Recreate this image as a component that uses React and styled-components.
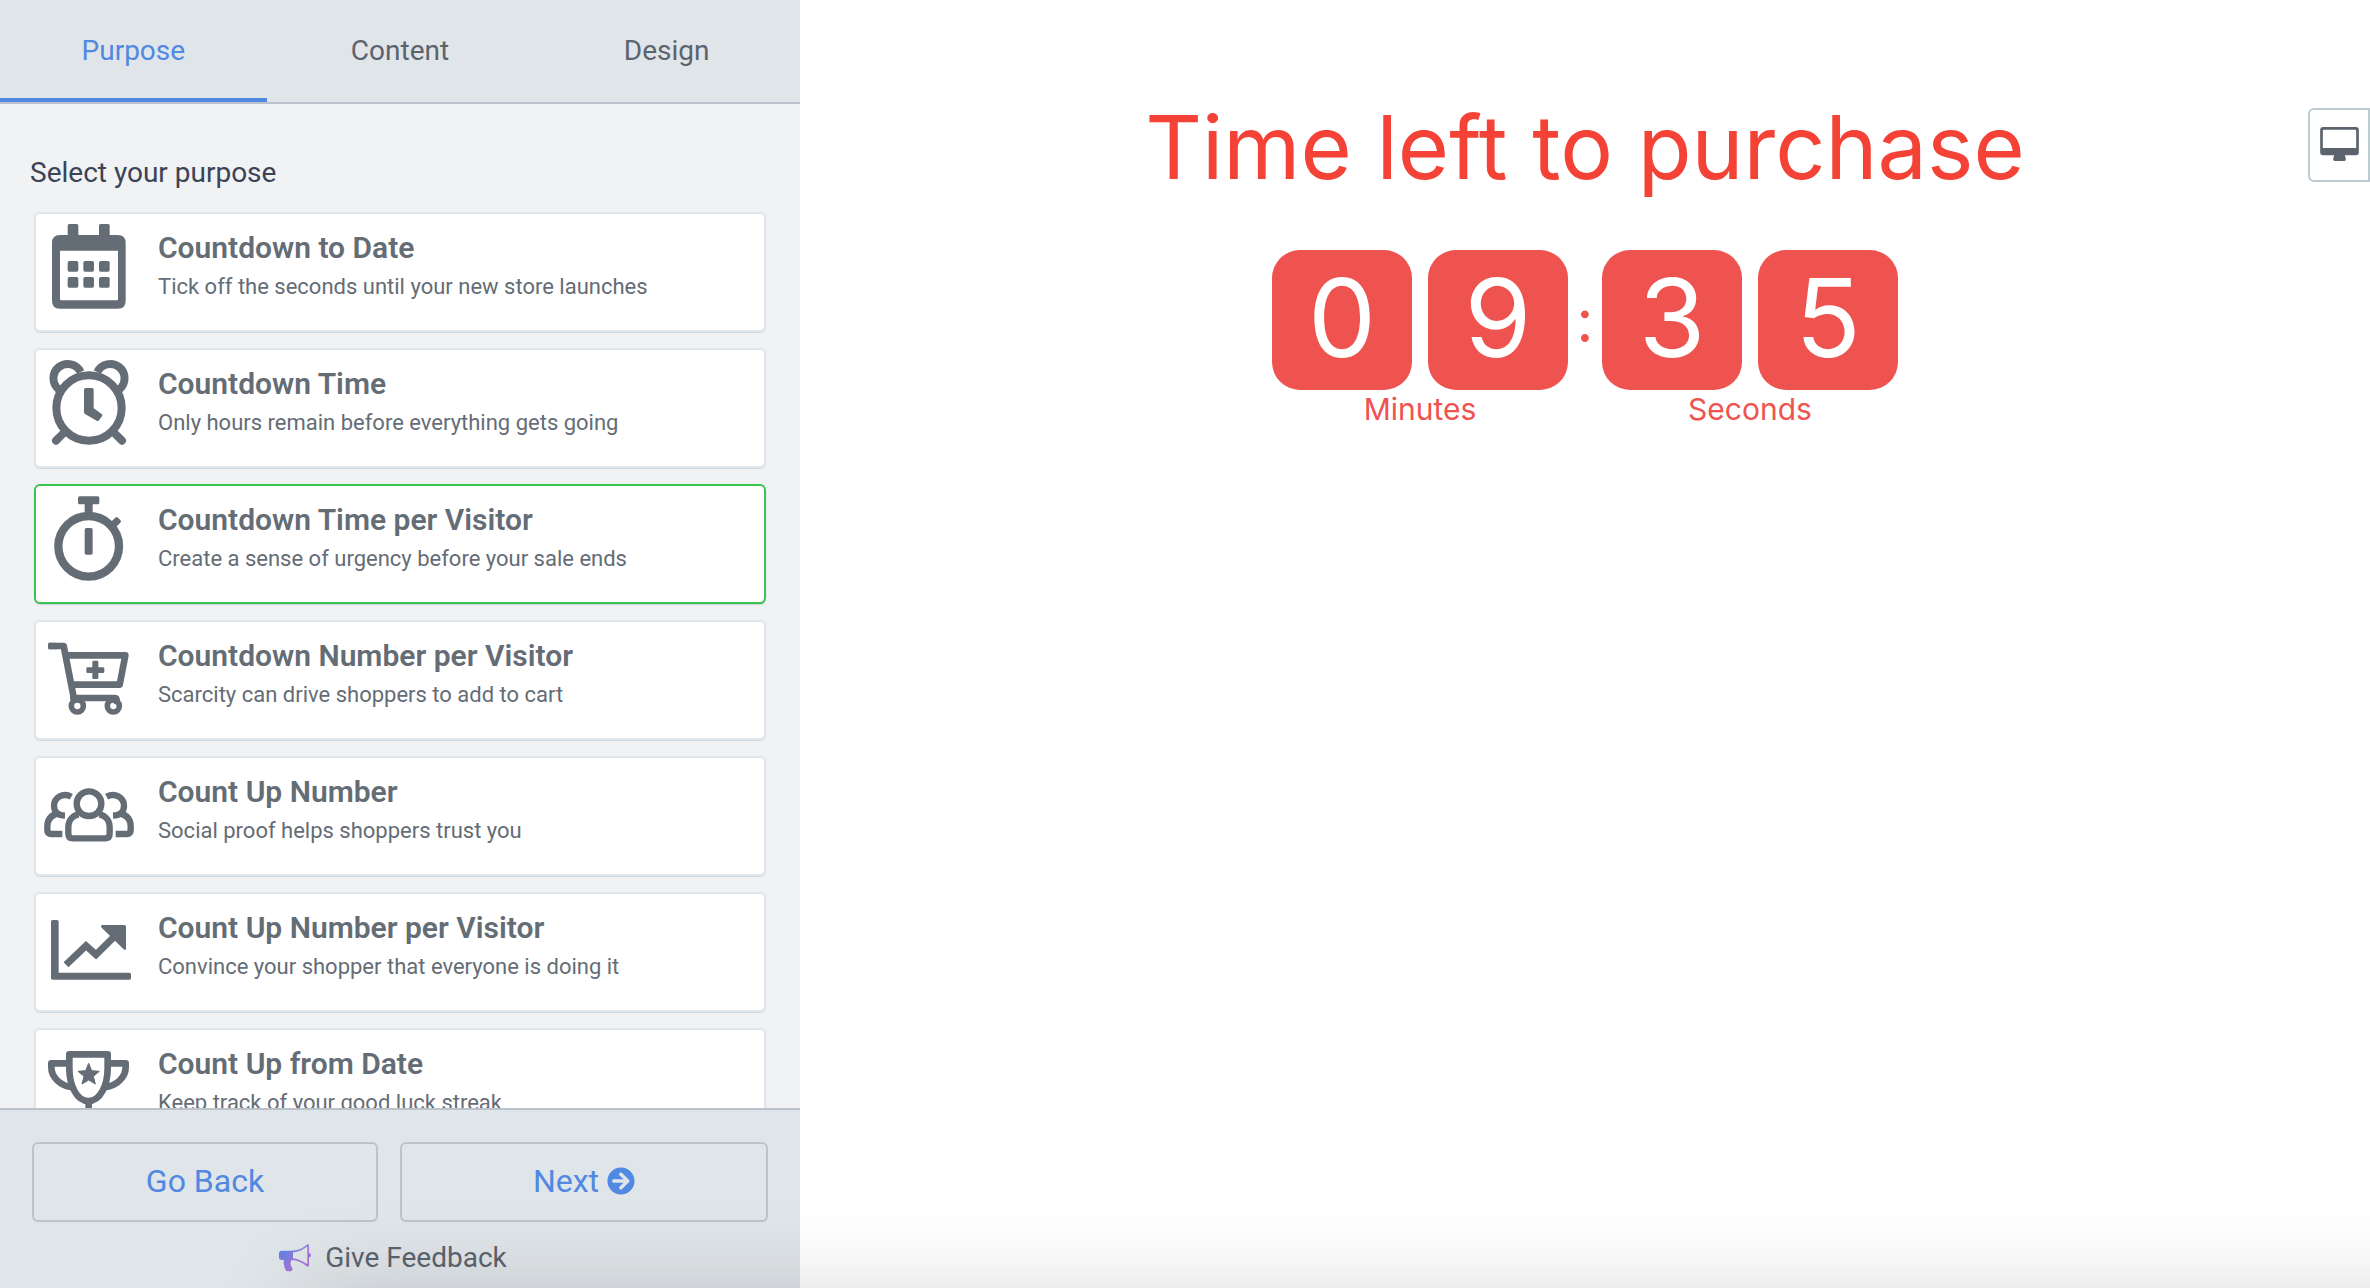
import React, { useState } from "react";
import styled, { createGlobalStyle } from "styled-components";
import { FaArrowCircleRight } from "react-icons/fa";

const GlobalStyle = createGlobalStyle`
  * {
    box-sizing: border-box;
  }

  body {
    margin: 0;
    background: #fff;
    font-family: Roboto, sans-serif;
  }

  button {
    font-family: inherit;
    cursor: pointer;
  }
`;

function CalendarIcon() {
  return (
    <PurposeSvg>
      <rect x="71" y="6" width="32" height="50" rx="5" />
      <rect x="165" y="6" width="32" height="50" rx="5" />
      <path
        fillRule="evenodd"
        d="M48 39H221Q245 39 245 63V236Q245 260 221 260H48Q24 260 24 236V63Q24 39 48 39ZM48 86V232Q48 235 51 235H219Q222 235 222 232V86Z"
      />
      {[71, 118, 165].map((x) => (
        <React.Fragment key={x}>
          <rect x={x} y="117" width="32" height="32" rx="5" />
          <rect x={x} y="165" width="32" height="32" rx="5" />
        </React.Fragment>
      ))}
    </PurposeSvg>
  );
}

function AlarmIcon() {
  return (
    <PurposeSvg>
      <g fill="none" stroke="currentColor" strokeWidth="24">
        <circle cx="135" cy="150" r="98" />
        <path d="M44 94A43 43 0 1 1 110 42" />
        <path d="M226 94A43 43 0 1 0 160 42" />
        <path d="M62 222L36 248M208 222L234 248" strokeLinecap="round" />
      </g>
      <path d="M125 90H144Q149 90 149 95V151L173 168Q177 171 174 175L165 187Q162 191 158 188L123 168Q120 166 120 162V95Q120 90 125 90Z" />
    </PurposeSvg>
  );
}

function StopwatchIcon() {
  return (
    <PurposeSvg>
      <circle cx="134" cy="157" r="91" fill="none" stroke="currentColor" strokeWidth="25" />
      <rect x="102" y="7" width="64" height="24" rx="5" />
      <rect x="122" y="24" width="24" height="40" />
      <rect x="122" y="102" width="24" height="80" rx="5" />
      <path d="M194 90L214 71Q218 67 222 71L229 78Q233 82 229 86L209 106Z" />
    </PurposeSvg>
  );
}

function CartIcon() {
  return (
    <PurposeSvg>
      <g fill="none" stroke="currentColor" strokeWidth="20" strokeLinejoin="round">
        <path d="M14 48H59L91 212" />
        <path d="M66 76H244L227 164H82" />
        <path d="M88 204H214Q218 204 218 214" strokeLinecap="round" />
        <circle cx="100" cy="228" r="18" strokeWidth="17" />
        <circle cx="208" cy="228" r="18" strokeWidth="17" />
      </g>
      <rect x="12" y="38" width="30" height="20" rx="5" />
      <rect x="145" y="92" width="18" height="55" rx="4" />
      <rect x="127" y="112" width="54" height="17" rx="4" />
    </PurposeSvg>
  );
}

function PeopleIcon() {
  return (
    <PurposeSvg>
      <g fill="none" stroke="currentColor" strokeWidth="19">
        <circle cx="135" cy="113" r="37" />
        <path d="M104 145C84 149 73 164 73 184V203Q73 217 87 217H183Q197 217 197 203V184C197 164 186 149 166 145" />
        <path d="M82 92C56 78 30 96 30 120C30 134 39 148 63 149" />
        <path d="M42 142C20 148 10 162 10 180V192Q10 204 22 204H55" />
        <path d="M188 92C214 78 240 96 240 120C240 134 231 148 207 149" />
        <path d="M228 142C250 148 260 162 260 180V192Q260 204 248 204H215" />
      </g>
    </PurposeSvg>
  );
}

function ChartIcon() {
  return (
    <PurposeSvg>
      <path d="M26 54H39Q44 54 44 59V212H256Q261 212 261 217V228Q261 233 256 233H26Q21 233 21 228V59Q21 54 26 54Z" />
      <path d="M66 188L126 131L156 158L218 97" fill="none" stroke="currentColor" strokeWidth="21" />
      <path d="M175 69H241Q246 69 246 74V139Q246 147 239 142L173 77Q168 70 175 69Z" />
    </PurposeSvg>
  );
}

function TrophyIcon() {
  return (
    <PurposeSvg>
      <g fill="none" stroke="currentColor" strokeWidth="20" strokeLinejoin="round">
        <path d="M76 49H191V90C191 140 170 189 133 189C97 189 76 140 76 90Z" />
        <path d="M72 76H22V88C22 118 48 142 84 148" />
        <path d="M195 76H245V88C245 118 219 142 183 148" />
        <path d="M134 190V244M84 250H184" />
      </g>
      <path d="M134 76L143 98L166 100L148 115L154 138L134 126L114 138L120 115L102 100L125 98Z" stroke="currentColor" strokeWidth="3" strokeLinejoin="round" />
    </PurposeSvg>
  );
}

function MegaphoneIcon() {
  return (
    <svg width="32" height="28" viewBox="0 0 96 84" aria-hidden="true">
      <defs>
        <linearGradient id="megaphone" x1="0" y1="0" x2="1" y2="1">
          <stop offset="0.1" stopColor="#5585e6" />
          <stop offset="0.55" stopColor="#9a78dc" />
          <stop offset="1" stopColor="#b96ad4" />
        </linearGradient>
      </defs>
      <path
        fill="url(#megaphone)"
        fillRule="evenodd"
        d="M8 20H38C58 19 72 12 83 2Q90 -2 90 5V27Q96 28 96 34Q96 40 90 41V63Q90 71 83 67C70 56 56 49 38 48C32 56 35 65 40 73Q42 80 35 82H26Q20 82 18 74C14 63 13 55 15 48H8Q0 48 0 40V28Q0 20 8 20ZM42 25V43C58 45 73 52 85 61V7C73 17 58 24 42 25Z"
      />
    </svg>
  );
}

function DesktopIcon() {
  return (
    <svg width="39" height="34" viewBox="0 0 116 102" fill="#5b636d" aria-hidden="true">
      <path
        fillRule="evenodd"
        d="M9 0H107Q116 0 116 9V76Q116 85 107 85H74L77 95Q78 102 72 102H44Q38 102 39 95L42 85H9Q0 85 0 76V9Q0 0 9 0ZM8 11V63H108V11Q108 8 105 8H11Q8 8 8 11Z"
      />
    </svg>
  );
}

const tabs = ["Purpose", "Content", "Design"];

const purposes = [
  { id: "date", title: "Countdown to Date", text: "Tick off the seconds until your new store launches", Icon: CalendarIcon },
  { id: "time", title: "Countdown Time", text: "Only hours remain before everything gets going", Icon: AlarmIcon },
  { id: "timeVisitor", title: "Countdown Time per Visitor", text: "Create a sense of urgency before your sale ends", Icon: StopwatchIcon },
  { id: "numberVisitor", title: "Countdown Number per Visitor", text: "Scarcity can drive shoppers to add to cart", Icon: CartIcon },
  { id: "upNumber", title: "Count Up Number", text: "Social proof helps shoppers trust you", Icon: PeopleIcon },
  { id: "upVisitor", title: "Count Up Number per Visitor", text: "Convince your shopper that everyone is doing it", Icon: ChartIcon },
  { id: "upDate", title: "Count Up from Date", text: "Keep track of your good luck streak", Icon: TrophyIcon },
];

function TimeUnit({ digits, label }) {
  return (
    <Unit>
      <Digits>
        {digits.split("").map((digit, index) => (
          <Digit key={index}>{digit}</Digit>
        ))}
      </Digits>
      <UnitLabel>{label}</UnitLabel>
    </Unit>
  );
}

function App() {
  const [activeTab, setActiveTab] = useState("Purpose");
  const [purpose, setPurpose] = useState("timeVisitor");

  return (
    <Page>
      <GlobalStyle />
      <Sidebar>
        <Tabs>
          {tabs.map((tab) => (
            <Tab key={tab} $active={tab === activeTab} onClick={() => setActiveTab(tab)}>
              {tab}
            </Tab>
          ))}
        </Tabs>
        <Panel>
          <PanelTitle>Select your purpose</PanelTitle>
          <PurposeList>
            {purposes.map(({ id, title, text, Icon }) => (
              <PurposeCard
                key={id}
                $selected={id === purpose}
                aria-pressed={id === purpose}
                onClick={() => setPurpose(id)}
              >
                <Icon />
                <PurposeText>
                  <PurposeTitle>{title}</PurposeTitle>
                  <PurposeInfo>{text}</PurposeInfo>
                </PurposeText>
              </PurposeCard>
            ))}
          </PurposeList>
        </Panel>
        <Footer>
          <FooterButtons>
            <FooterButton>Go Back</FooterButton>
            <FooterButton>
              Next <FaArrowCircleRight size={28} />
            </FooterButton>
          </FooterButtons>
          <Feedback href="#feedback">
            <MegaphoneIcon />
            Give Feedback
          </Feedback>
        </Footer>
      </Sidebar>
      <Preview>
        <Heading>Time left to purchase</Heading>
        <Timer>
          <TimeUnit digits="09" label="Minutes" />
          <Colon>:</Colon>
          <TimeUnit digits="35" label="Seconds" />
        </Timer>
        <DeviceButton aria-label="Desktop view">
          <DesktopIcon />
        </DeviceButton>
      </Preview>
      <BottomShadow />
    </Page>
  );
}

const Page = styled.div`
  position: relative;
  display: flex;
  height: 100vh;
  overflow: hidden;
`;

const Sidebar = styled.aside`
  display: flex;
  flex-direction: column;
  flex: 0 0 800px;
  background: #f0f2f4;
`;

const Tabs = styled.nav`
  display: flex;
  background: #e0e5e9;
  border-bottom: 2px solid #bac3cc;
`;

const Tab = styled.button`
  flex: 1;
  height: 102px;
  padding: 2px 0 0;
  border: none;
  border-bottom: 4px solid ${(props) => (props.$active ? "#5088e2" : "transparent")};
  background: none;
  color: ${(props) => (props.$active ? "#5088e2" : "#5c636e")};
  font-size: 28px;
`;

const Panel = styled.div`
  flex: 1;
  min-height: 0;
  padding: 53px 30px 0;
  overflow: hidden auto;
  scrollbar-width: none;
`;

const PanelTitle = styled.h2`
  margin: 0 0 23px;
  color: #3b4354;
  font-size: 28px;
  font-weight: 400;
  line-height: 32px;
`;

const PurposeList = styled.div`
  display: flex;
  flex-direction: column;
  gap: 16px;
  padding: 0 4px 16px;
`;

const PurposeCard = styled.button`
  display: flex;
  align-items: flex-start;
  gap: 24px;
  height: 120px;
  padding: 8px;
  border: 2px solid ${(props) => (props.$selected ? "#39c452" : "#dfe5ea")};
  border-radius: 6px;
  background: #fff;
  box-shadow: 0 1px 1px #cdd6de;
  color: #646c75;
  text-align: left;
`;

const PurposeSvg = styled.svg.attrs({ viewBox: "0 0 270 270", fill: "currentColor", "aria-hidden": true })`
  flex: none;
  width: 90px;
  height: 90px;
`;

const PurposeText = styled.span`
  display: flex;
  flex-direction: column;
  gap: 7px;
  padding-top: 8px;
`;

const PurposeTitle = styled.span`
  font-size: 30px;
  font-weight: 600;
  line-height: 36px;
`;

const PurposeInfo = styled.span`
  font-size: 22px;
  line-height: 28px;
`;

const Footer = styled.footer`
  padding: 32px 32px 14px;
  border-top: 2px solid #bac3cc;
  background: #e0e5e9;
`;

const FooterButtons = styled.div`
  display: grid;
  grid-template-columns: 346fr 368fr;
  gap: 22px;
`;

const FooterButton = styled.button`
  display: flex;
  align-items: center;
  justify-content: center;
  gap: 8px;
  height: 80px;
  padding: 0 0 2px;
  border: 2px solid #bdc3c8;
  border-radius: 6px;
  background: none;
  color: #5088e2;
  font-size: 32px;
`;

const Feedback = styled.a`
  display: flex;
  align-items: center;
  justify-content: center;
  gap: 14px;
  margin-top: 20px;
  padding-right: 14px;
  color: #5c636e;
  font-size: 28px;
  line-height: 32px;
  text-decoration: none;
`;

const Preview = styled.main`
  position: relative;
  display: flex;
  flex: 1;
  flex-direction: column;
  align-items: center;
  padding-top: 97px;
  font-family: Inter, sans-serif;
`;

const Heading = styled.h1`
  margin: 0 0 53px;
  color: #f44336;
  font-size: 88px;
  font-weight: 400;
  line-height: 100px;
  white-space: nowrap;
`;

const Timer = styled.div`
  display: flex;
  color: #ef5350;
`;

const Unit = styled.div`
  text-align: center;
`;

const Digits = styled.div`
  display: flex;
  gap: 16px;
`;

const Digit = styled.span`
  width: 140px;
  height: 140px;
  border-radius: 28px;
  background: #ef5350;
  color: #fff;
  font-size: 108px;
  line-height: 136px;
`;

const UnitLabel = styled.div`
  font-size: 30px;
  line-height: 38px;
`;

const Colon = styled.span`
  width: 34px;
  font-size: 60px;
  line-height: 140px;
  text-align: center;
`;

const DeviceButton = styled.button`
  position: absolute;
  top: 108px;
  right: 0;
  display: flex;
  align-items: center;
  justify-content: center;
  width: 62px;
  height: 74px;
  padding: 0 0 2px;
  border: 2px solid #bccad2;
  border-radius: 6px 0 0 6px;
  background: #fff;
`;

const BottomShadow = styled.div`
  position: absolute;
  top: 100%;
  right: -200px;
  left: 300px;
  height: 200px;
  box-shadow: 0 0 90px rgba(0, 0, 0, 0.14);
  pointer-events: none;
`;

export default App;
